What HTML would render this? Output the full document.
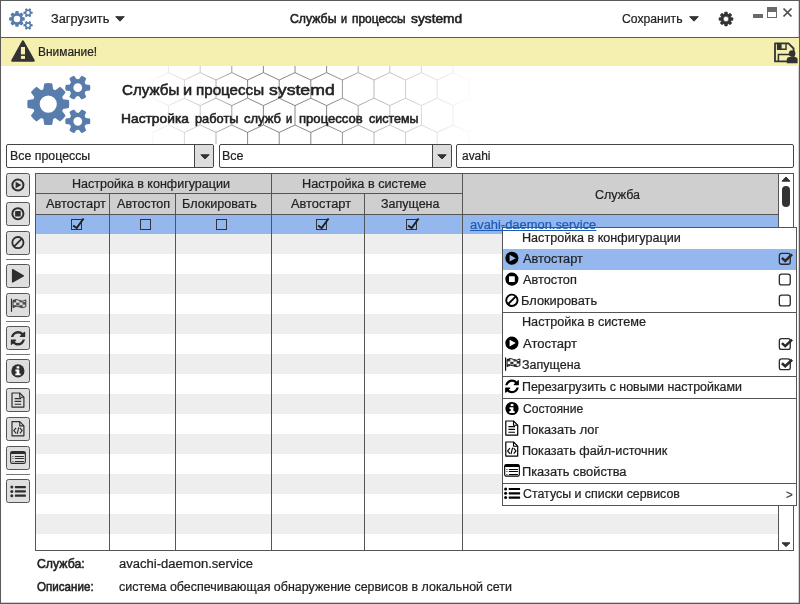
<!DOCTYPE html>
<html lang="ru"><head><meta charset="utf-8"><title>Службы и процессы systemd</title>
<style>
*{box-sizing:border-box;margin:0;padding:0}
html,body{width:800px;height:604px;overflow:hidden;background:#fff}
body{font-family:"Liberation Sans","DejaVu Sans",sans-serif;font-size:12.5px;color:#222;position:relative}
.a{position:absolute}
svg{position:absolute;overflow:visible}
.t{position:absolute;white-space:nowrap;line-height:16px;height:16px;transform-origin:0 0;-webkit-text-stroke:.22px currentColor}
.b{-webkit-text-stroke:.55px currentColor}
.u{text-decoration:underline}
#win{left:0;top:0;width:800px;height:604px;border:1px solid #5a5a5a;background:#fff}
#tsep{left:0;top:37px;width:800px;height:1px;background:#5a5a5a}
#warn{left:1px;top:38px;width:798px;height:28px;background:#f5f0b0}
.combo{border:1px solid #444;background:#fff;height:24px;top:144px;border-radius:2px;overflow:hidden}
.cbtn{position:absolute;right:0;top:0;width:19px;height:22px;background:#ddd;border-left:1px solid #444}
.tb{position:absolute;left:6px;width:24px;height:24px;border:1px solid #555;border-radius:2.5px;background:#dfdfdf}
.ts{position:absolute;left:6px;width:24px;height:1px;background:#777}
#grid{left:35px;top:173px;width:759px;height:378px;border:1px solid #555;background:#fff;overflow:hidden}
#hdr{left:0;top:0;width:742px;height:40px;background:#cfcfcf}
.vl{position:absolute;width:1px;background:#555}
.hl{position:absolute;height:1px;background:#555}
.st{position:absolute;left:0;width:742px;height:20px;background:#eee}
#sel{position:absolute;left:0;top:41px;width:742px;height:19px;background:#94b8ee}
.cb{position:absolute;width:11px;height:11px;border:1px solid #333;top:219px}
#menu{left:502px;top:227px;width:295px;height:279px;border:1px solid #555;background:#fff}
.ml{position:absolute;left:0;width:293px;height:1px;background:#555}
.mc{position:absolute;left:778.6px;width:12.5px;height:12.5px;border:1.5px solid #333;border-radius:3px}
</style></head><body>
<div id="win" class="a"></div>
<div id="tsep" class="a"></div>
<svg style="left:0;top:0" width="800" height="604" viewBox="0 0 800 604"><rect x="798.75" y="0" width="1.25" height="604" fill="#5a5a5a"/><rect x="0" y="602.7" width="800" height="1.3" fill="#5a5a5a"/></svg>
<div id="warn" class="a"></div>

<!-- title bar icons -->
<svg class="a" style="left:9px;top:8px" width="24.00" height="22.12" viewBox="0 0 64 59"><path fill="#587cac" fill-rule="evenodd" d="M16.35 14.29L17.25 8.48A21 21 0 0 1 25.25 8.48L26.15 14.29A15.6 15.6 0 0 1 28.26 15.16L33.00 11.69A21 21 0 0 1 38.66 17.35L35.19 22.09A15.6 15.6 0 0 1 36.06 24.20L41.87 25.10A21 21 0 0 1 41.87 33.10L36.06 34.00A15.6 15.6 0 0 1 35.19 36.11L38.66 40.85A21 21 0 0 1 33.00 46.51L28.26 43.04A15.6 15.6 0 0 1 26.15 43.91L25.25 49.72A21 21 0 0 1 17.25 49.72L16.35 43.91A15.6 15.6 0 0 1 14.24 43.04L9.50 46.51A21 21 0 0 1 3.84 40.85L7.31 36.11A15.6 15.6 0 0 1 6.44 34.00L0.63 33.10A21 21 0 0 1 0.63 25.10L6.44 24.20A15.6 15.6 0 0 1 7.31 22.09L3.84 17.35A21 21 0 0 1 9.50 11.69L14.24 15.16A15.6 15.6 0 0 1 16.35 14.29ZM12.65 29.10a8.6 8.6 0 1 0 17.2 0a8.6 8.6 0 1 0 -17.2 0ZM51.91 4.17L54.56 0.78A12.5 12.5 0 0 1 59.24 3.48L57.63 7.47A8.6 8.6 0 0 1 58.74 9.40L63.00 10.00A12.5 12.5 0 0 1 63.00 15.40L58.74 16.00A8.6 8.6 0 0 1 57.63 17.93L59.24 21.92A12.5 12.5 0 0 1 54.56 24.62L51.91 21.23A8.6 8.6 0 0 1 49.69 21.23L47.04 24.62A12.5 12.5 0 0 1 42.36 21.92L43.97 17.93A8.6 8.6 0 0 1 42.86 16.00L38.60 15.40A12.5 12.5 0 0 1 38.60 10.00L42.86 9.40A8.6 8.6 0 0 1 43.97 7.47L42.36 3.48A12.5 12.5 0 0 1 47.04 0.78L49.69 4.17A8.6 8.6 0 0 1 51.91 4.17ZM46.40 12.70a4.4 4.4 0 1 0 8.8 0a4.4 4.4 0 1 0 -8.8 0ZM51.91 37.77L54.56 34.38A12.5 12.5 0 0 1 59.24 37.08L57.63 41.07A8.6 8.6 0 0 1 58.74 43.00L63.00 43.60A12.5 12.5 0 0 1 63.00 49.00L58.74 49.60A8.6 8.6 0 0 1 57.63 51.53L59.24 55.52A12.5 12.5 0 0 1 54.56 58.22L51.91 54.83A8.6 8.6 0 0 1 49.69 54.83L47.04 58.22A12.5 12.5 0 0 1 42.36 55.52L43.97 51.53A8.6 8.6 0 0 1 42.86 49.60L38.60 49.00A12.5 12.5 0 0 1 38.60 43.60L42.86 43.00A8.6 8.6 0 0 1 43.97 41.07L42.36 37.08A12.5 12.5 0 0 1 47.04 34.38L49.69 37.77A8.6 8.6 0 0 1 51.91 37.77ZM46.40 46.30a4.4 4.4 0 1 0 8.8 0a4.4 4.4 0 1 0 -8.8 0Z"/></svg>
<svg style="left:114.6px;top:15.6px" width="10" height="6" viewBox="0 0 10 6"><path d="M.7 .7H9.3L5 5.2Z" fill="#333" stroke="#333" stroke-width="1" stroke-linejoin="round"/></svg>
<svg style="left:688.8px;top:15.7px" width="10" height="6" viewBox="0 0 10 6"><path d="M.7 .7H9.3L5 5.2Z" fill="#333" stroke="#333" stroke-width="1" stroke-linejoin="round"/></svg>
<svg style="left:715px;top:10px" width="22" height="18" viewBox="715 10 22 18"><path d="M724.40 14.05L724.75 12.11A7.0 7.0 0 0 1 727.25 12.11L727.60 14.05A5.2 5.2 0 0 1 728.37 14.37L729.99 13.25A7.0 7.0 0 0 1 731.75 15.01L730.63 16.63A5.2 5.2 0 0 1 730.95 17.40L732.89 17.75A7.0 7.0 0 0 1 732.89 20.25L730.95 20.60A5.2 5.2 0 0 1 730.63 21.37L731.75 22.99A7.0 7.0 0 0 1 729.99 24.75L728.37 23.63A5.2 5.2 0 0 1 727.60 23.95L727.25 25.89A7.0 7.0 0 0 1 724.75 25.89L724.40 23.95A5.2 5.2 0 0 1 723.63 23.63L722.01 24.75A7.0 7.0 0 0 1 720.25 22.99L721.37 21.37A5.2 5.2 0 0 1 721.05 20.60L719.11 20.25A7.0 7.0 0 0 1 719.11 17.75L721.05 17.40A5.2 5.2 0 0 1 721.37 16.63L720.25 15.01A7.0 7.0 0 0 1 722.01 13.25L723.63 14.37A5.2 5.2 0 0 1 724.40 14.05ZM723.30 19.00a2.7 2.7 0 1 0 5.4 0a2.7 2.7 0 1 0 -5.4 0Z" fill="#333" fill-rule="evenodd" stroke="#333" stroke-width=".6" stroke-linejoin="round"/></svg>
<div class="a" style="left:753px;top:14px;width:10px;height:4px;background:#6a6a6a"></div>
<div class="a" style="left:767px;top:7px;width:10px;height:11px;border:1px solid #6a6a6a;border-top-width:5px"></div>
<svg style="left:783px;top:8px" width="9" height="9" viewBox="0 0 9 9"><path d="M.5 .5L8.5 8.5M8.5 .5L.5 8.5" stroke="#4a4a4a" stroke-width="1.7" fill="none"/></svg>

<!-- warning bar icons -->
<svg style="left:10px;top:40px" width="26" height="23" viewBox="10 40 26 23"><path d="M22.9 41.6L12.4 60.6H33.6Z" fill="#333" stroke="#333" stroke-width="2.4" stroke-linejoin="round"/><rect x="20.9" y="47" width="4.1" height="7.4" fill="#f5f0b0"/><rect x="20.9" y="55.9" width="4.1" height="3" fill="#f5f0b0"/></svg>
<svg style="left:772px;top:40px" width="27" height="25" viewBox="772 40 27 25"><path d="M775 43.4H788.5L793.6 48.5V61.4H775Z" fill="none" stroke="#333" stroke-width="1.8" stroke-linejoin="round"/><rect x="777.4" y="43.2" width="4.2" height="6" fill="#333"/><path d="M777.6 43.4V49.2H786V43.4" fill="none" stroke="#333" stroke-width="1.4"/><path d="M778.4 61.4V54.6H790.5" fill="none" stroke="#333" stroke-width="1.5"/><circle cx="792.1" cy="53.6" r="3.3" fill="#333"/><path d="M786.8 63.2V59.8Q786.8 57 789.6 57H794.8Q797.6 57 797.6 59.8V63.2Z" fill="#333"/></svg>

<!-- header -->
<svg class="a" style="left:0;top:66px;overflow:hidden" width="800" height="78" viewBox="0 66 800 78"><defs><linearGradient id="hg" x1="0" x2="1" y1="0" y2="0"><stop offset="0.18" stop-color="#fff" stop-opacity="0"/><stop offset="0.25" stop-color="#fff" stop-opacity=".35"/><stop offset="0.31" stop-color="#fff" stop-opacity=".8"/><stop offset="0.41" stop-color="#fff" stop-opacity=".8"/><stop offset="0.45" stop-color="#fff" stop-opacity=".55"/><stop offset="0.5" stop-color="#fff" stop-opacity=".35"/><stop offset="0.55" stop-color="#fff" stop-opacity=".18"/><stop offset="0.595" stop-color="#fff" stop-opacity="0"/></linearGradient><mask id="hm"><rect x="0" y="60" width="800" height="90" fill="url(#hg)"/></mask></defs><path mask="url(#hm)" d="M105.4 54V72.6M105.4 72.6L89.6 80.0M105.4 72.6L121.2 80.0M137.0 54V72.6M137.0 72.6L121.2 80.0M137.0 72.6L152.8 80.0M168.6 54V72.6M168.6 72.6L152.8 80.0M168.6 72.6L184.4 80.0M200.2 54V72.6M200.2 72.6L184.4 80.0M200.2 72.6L216.0 80.0M231.8 54V72.6M231.8 72.6L216.0 80.0M231.8 72.6L247.6 80.0M263.4 54V72.6M263.4 72.6L247.6 80.0M263.4 72.6L279.2 80.0M295.0 54V72.6M295.0 72.6L279.2 80.0M295.0 72.6L310.8 80.0M326.6 54V72.6M326.6 72.6L310.8 80.0M326.6 72.6L342.4 80.0M358.2 54V72.6M358.2 72.6L342.4 80.0M358.2 72.6L374.0 80.0M389.8 54V72.6M389.8 72.6L374.0 80.0M389.8 72.6L405.6 80.0M421.4 54V72.6M421.4 72.6L405.6 80.0M421.4 72.6L437.2 80.0M453.0 54V72.6M453.0 72.6L437.2 80.0M453.0 72.6L468.8 80.0M484.6 54V72.6M484.6 72.6L468.8 80.0M484.6 72.6L500.4 80.0M516.2 54V72.6M516.2 72.6L500.4 80.0M516.2 72.6L532.0 80.0M89.6 80V98.2M89.6 98.2L73.8 105.6M89.6 98.2L105.4 105.6M121.2 80V98.2M121.2 98.2L105.4 105.6M121.2 98.2L137.0 105.6M152.8 80V98.2M152.8 98.2L137.0 105.6M152.8 98.2L168.6 105.6M184.4 80V98.2M184.4 98.2L168.6 105.6M184.4 98.2L200.2 105.6M216.0 80V98.2M216.0 98.2L200.2 105.6M216.0 98.2L231.8 105.6M247.6 80V98.2M247.6 98.2L231.8 105.6M247.6 98.2L263.4 105.6M279.2 80V98.2M279.2 98.2L263.4 105.6M279.2 98.2L295.0 105.6M310.8 80V98.2M310.8 98.2L295.0 105.6M310.8 98.2L326.6 105.6M342.4 80V98.2M342.4 98.2L326.6 105.6M342.4 98.2L358.2 105.6M374.0 80V98.2M374.0 98.2L358.2 105.6M374.0 98.2L389.8 105.6M405.6 80V98.2M405.6 98.2L389.8 105.6M405.6 98.2L421.4 105.6M437.2 80V98.2M437.2 98.2L421.4 105.6M437.2 98.2L453.0 105.6M468.8 80V98.2M468.8 98.2L453.0 105.6M468.8 98.2L484.6 105.6M500.4 80V98.2M500.4 98.2L484.6 105.6M500.4 98.2L516.2 105.6M105.4 105.7V125M105.4 125L89.6 132.4M105.4 125L121.2 132.4M137.0 105.7V125M137.0 125L121.2 132.4M137.0 125L152.8 132.4M168.6 105.7V125M168.6 125L152.8 132.4M168.6 125L184.4 132.4M200.2 105.7V125M200.2 125L184.4 132.4M200.2 125L216.0 132.4M231.8 105.7V125M231.8 125L216.0 132.4M231.8 125L247.6 132.4M263.4 105.7V125M263.4 125L247.6 132.4M263.4 125L279.2 132.4M295.0 105.7V125M295.0 125L279.2 132.4M295.0 125L310.8 132.4M326.6 105.7V125M326.6 125L310.8 132.4M326.6 125L342.4 132.4M358.2 105.7V125M358.2 125L342.4 132.4M358.2 125L374.0 132.4M389.8 105.7V125M389.8 125L374.0 132.4M389.8 125L405.6 132.4M421.4 105.7V125M421.4 125L405.6 132.4M421.4 125L437.2 132.4M453.0 105.7V125M453.0 125L437.2 132.4M453.0 125L468.8 132.4M484.6 105.7V125M484.6 125L468.8 132.4M484.6 125L500.4 132.4M516.2 105.7V125M516.2 125L500.4 132.4M516.2 125L532.0 132.4M89.6 132.2V150M89.6 150L73.8 157.4M89.6 150L105.4 157.4M121.2 132.2V150M121.2 150L105.4 157.4M121.2 150L137.0 157.4M152.8 132.2V150M152.8 150L137.0 157.4M152.8 150L168.6 157.4M184.4 132.2V150M184.4 150L168.6 157.4M184.4 150L200.2 157.4M216.0 132.2V150M216.0 150L200.2 157.4M216.0 150L231.8 157.4M247.6 132.2V150M247.6 150L231.8 157.4M247.6 150L263.4 157.4M279.2 132.2V150M279.2 150L263.4 157.4M279.2 150L295.0 157.4M310.8 132.2V150M310.8 150L295.0 157.4M310.8 150L326.6 157.4M342.4 132.2V150M342.4 150L326.6 157.4M342.4 150L358.2 157.4M374.0 132.2V150M374.0 150L358.2 157.4M374.0 150L389.8 157.4M405.6 132.2V150M405.6 150L389.8 157.4M405.6 150L421.4 157.4M437.2 132.2V150M437.2 150L421.4 157.4M437.2 150L453.0 157.4M468.8 132.2V150M468.8 150L453.0 157.4M468.8 150L484.6 157.4M500.4 132.2V150M500.4 150L484.6 157.4M500.4 150L516.2 157.4" stroke="#444" stroke-width=".8" fill="none"/></svg>
<svg class="a" style="left:27px;top:75px" width="64.00" height="59.00" viewBox="0 0 64 59"><path fill="#587cac" fill-rule="evenodd" d="M16.35 14.29L17.25 8.48A21 21 0 0 1 25.25 8.48L26.15 14.29A15.6 15.6 0 0 1 28.26 15.16L33.00 11.69A21 21 0 0 1 38.66 17.35L35.19 22.09A15.6 15.6 0 0 1 36.06 24.20L41.87 25.10A21 21 0 0 1 41.87 33.10L36.06 34.00A15.6 15.6 0 0 1 35.19 36.11L38.66 40.85A21 21 0 0 1 33.00 46.51L28.26 43.04A15.6 15.6 0 0 1 26.15 43.91L25.25 49.72A21 21 0 0 1 17.25 49.72L16.35 43.91A15.6 15.6 0 0 1 14.24 43.04L9.50 46.51A21 21 0 0 1 3.84 40.85L7.31 36.11A15.6 15.6 0 0 1 6.44 34.00L0.63 33.10A21 21 0 0 1 0.63 25.10L6.44 24.20A15.6 15.6 0 0 1 7.31 22.09L3.84 17.35A21 21 0 0 1 9.50 11.69L14.24 15.16A15.6 15.6 0 0 1 16.35 14.29ZM12.65 29.10a8.6 8.6 0 1 0 17.2 0a8.6 8.6 0 1 0 -17.2 0ZM51.91 4.17L54.56 0.78A12.5 12.5 0 0 1 59.24 3.48L57.63 7.47A8.6 8.6 0 0 1 58.74 9.40L63.00 10.00A12.5 12.5 0 0 1 63.00 15.40L58.74 16.00A8.6 8.6 0 0 1 57.63 17.93L59.24 21.92A12.5 12.5 0 0 1 54.56 24.62L51.91 21.23A8.6 8.6 0 0 1 49.69 21.23L47.04 24.62A12.5 12.5 0 0 1 42.36 21.92L43.97 17.93A8.6 8.6 0 0 1 42.86 16.00L38.60 15.40A12.5 12.5 0 0 1 38.60 10.00L42.86 9.40A8.6 8.6 0 0 1 43.97 7.47L42.36 3.48A12.5 12.5 0 0 1 47.04 0.78L49.69 4.17A8.6 8.6 0 0 1 51.91 4.17ZM46.40 12.70a4.4 4.4 0 1 0 8.8 0a4.4 4.4 0 1 0 -8.8 0ZM51.91 37.77L54.56 34.38A12.5 12.5 0 0 1 59.24 37.08L57.63 41.07A8.6 8.6 0 0 1 58.74 43.00L63.00 43.60A12.5 12.5 0 0 1 63.00 49.00L58.74 49.60A8.6 8.6 0 0 1 57.63 51.53L59.24 55.52A12.5 12.5 0 0 1 54.56 58.22L51.91 54.83A8.6 8.6 0 0 1 49.69 54.83L47.04 58.22A12.5 12.5 0 0 1 42.36 55.52L43.97 51.53A8.6 8.6 0 0 1 42.86 49.60L38.60 49.00A12.5 12.5 0 0 1 38.60 43.60L42.86 43.00A8.6 8.6 0 0 1 43.97 41.07L42.36 37.08A12.5 12.5 0 0 1 47.04 34.38L49.69 37.77A8.6 8.6 0 0 1 51.91 37.77ZM46.40 46.30a4.4 4.4 0 1 0 8.8 0a4.4 4.4 0 1 0 -8.8 0Z"/></svg>

<!-- combos -->
<div class="a combo" style="left:6px;width:208px"><div class="cbtn"></div></div>
<div class="a combo" style="left:219px;width:233px"><div class="cbtn"></div></div>
<div class="a combo" style="left:456px;width:338px"></div>
<svg style="left:199.5px;top:153.7px" width="10" height="6" viewBox="0 0 10 6"><path d="M.8 .8H9.2L5 5Z" fill="#333" stroke="#333" stroke-width="1" stroke-linejoin="round"/></svg>
<svg style="left:436.5px;top:153.7px" width="10" height="6" viewBox="0 0 10 6"><path d="M.8 .8H9.2L5 5Z" fill="#333" stroke="#333" stroke-width="1" stroke-linejoin="round"/></svg>

<!-- toolbar -->
<div class="tb" style="top:173px"></div>
<div class="tb" style="top:202px"></div>
<div class="tb" style="top:231px"></div>
<div class="ts" style="top:259px"></div>
<div class="tb" style="top:264px"></div>
<div class="tb" style="top:293px"></div>
<div class="ts" style="top:321px"></div>
<div class="tb" style="top:326px"></div>
<div class="ts" style="top:354px"></div>
<div class="tb" style="top:359px"></div>
<div class="tb" style="top:388px"></div>
<div class="tb" style="top:417px"></div>
<div class="tb" style="top:446px"></div>
<div class="ts" style="top:474px"></div>
<div class="tb" style="top:479px"></div>
<svg style="left:0px;top:170px" width="40" height="340" viewBox="0 170 40 340"><circle cx="17.9" cy="185" r="5.55" fill="none" stroke="#2e2e2e" stroke-width="1.95"/><path d="M15.599999999999998 181.7L21.4 185L15.599999999999998 188.3Z" fill="#2e2e2e"/><circle cx="17.9" cy="213.7" r="5.55" fill="none" stroke="#2e2e2e" stroke-width="1.95"/><rect x="15.099999999999998" y="210.89999999999998" width="5.6" height="5.6" rx=".5" fill="#2e2e2e"/><circle cx="17.9" cy="242.6" r="5.6" fill="none" stroke="#2e2e2e" stroke-width="1.8"/><path d="M13.94 246.56L21.86 238.64" stroke="#2e2e2e" stroke-width="1.8"/><path d="M12.599999999999998 269.6L23.299999999999997 275.8L12.599999999999998 282.0Z" fill="#2e2e2e" stroke="#2e2e2e" stroke-width="1.4" stroke-linejoin="round"/><path d="M11.5 298.6V311.8" stroke="#2e2e2e" stroke-width="1.2"/><clipPath id="fc1"><path d="M13.0 300.5Q16.2 298.5 19.4 300.40000000000003T25.8 299.90000000000003V306.70000000000005Q22.6 308.5 19.4 306.90000000000003T13.0 307.6Z"/></clipPath><path d="M13.0 300.5Q16.2 298.5 19.4 300.40000000000003T25.8 299.90000000000003V306.70000000000005Q22.6 308.5 19.4 306.90000000000003T13.0 307.6Z" fill="#dfdfdf"/><g clip-path="url(#fc1)"><rect x="13.00" y="299.80" width="3.20" height="2.67" fill="#2e2e2e" opacity=".8"/><rect x="13.00" y="305.13" width="3.20" height="2.67" fill="#2e2e2e" opacity=".8"/><rect x="16.20" y="302.77" width="3.20" height="2.67" fill="#2e2e2e" opacity=".8"/><rect x="19.40" y="299.80" width="3.20" height="2.67" fill="#2e2e2e" opacity=".8"/><rect x="19.40" y="305.13" width="3.20" height="2.67" fill="#2e2e2e" opacity=".8"/><rect x="22.60" y="301.97" width="3.20" height="2.67" fill="#2e2e2e" opacity=".8"/></g><path d="M13.0 300.5Q16.2 298.5 19.4 300.40000000000003T25.8 299.90000000000003V306.70000000000005Q22.6 308.5 19.4 306.90000000000003T13.0 307.6Z" fill="none" stroke="#2e2e2e" stroke-width=".9"/><path transform="translate(18 338.3) scale(0.00937) translate(-896 -896)" d="M1639 1056q0 5-1 7-64 268-268 434.5t-478 166.5q-146 0-282.5-55t-243.5-157l-129 129q-19 19-45 19t-45-19-19-45v-448q0-26 19-45t45-19h448q26 0 45 19t19 45-19 45l-137 137q71 66 161 102t187 36q134 0 250-65t186-179q11-17 53-117 8-23 30-23h192q13 0 22.5 9.5t9.5 22.5zm25-800v448q0 26-19 45t-45 19h-448q-26 0-45-19t-19-45 19-45l138-138q-148-137-349-137-134 0-250 65t-186 179q-11 17-53 117-8 23-30 23h-199q-13 0-22.5-9.5t-9.5-22.5v-7q65-268 270-434.5t480-166.5q146 0 284 55.5t245 156.5l130-129q19-19 45-19t45 19 19 45z" fill="#2e2e2e"/><circle cx="17.9" cy="370.9" r="6.6" fill="#2e2e2e"/><rect x="16.599999999999998" y="366.29999999999995" width="2.7" height="2.2" fill="#fff"/><path d="M15.399999999999999 369.59999999999997H19.299999999999997V373.5H20.5V375.29999999999995H15.299999999999999V373.5H16.599999999999998V371.4H15.399999999999999Z" fill="#fff"/><path d="M12.0 393.0H19.7L23.9 397.2V407.09999999999997H12.0Z" fill="none" stroke="#2e2e2e" stroke-width="1.2" stroke-linejoin="round"/><path d="M19.7 393.0V397.2H23.9" fill="none" stroke="#2e2e2e" stroke-width="1.1" stroke-linejoin="round"/><path d="M14.600000000000001 398.59999999999997H21.200000000000003M14.600000000000001 401.4H21.200000000000003M14.600000000000001 404.2H21.200000000000003" stroke="#2e2e2e" stroke-width="1.15"/><path d="M12.0 421.70000000000005H19.7L23.9 425.90000000000003V435.8H12.0Z" fill="none" stroke="#2e2e2e" stroke-width="1.2" stroke-linejoin="round"/><path d="M19.7 421.70000000000005V425.90000000000003H23.9" fill="none" stroke="#2e2e2e" stroke-width="1.1" stroke-linejoin="round"/><path d="M16.1 427.8L13.8 430.6L16.1 433.40000000000003M19.9 427.8L22.200000000000003 430.6L19.9 433.40000000000003M18.8 427.40000000000003L17.2 433.8" fill="none" stroke="#2e2e2e" stroke-width="1.15"/><rect x="10.600000000000001" y="451.65000000000003" width="14.75" height="11.700000000000001" rx="1.7" fill="none" stroke="#2e2e2e" stroke-width="1.1"/><path d="M10.65 454.1V453.1Q10.65 451.70000000000005 12.05 451.70000000000005H23.9Q25.299999999999997 451.70000000000005 25.299999999999997 453.1V454.1Z" fill="#2e2e2e"/><path d="M14.850000000000001 456.5H23.9M14.850000000000001 458.5H23.9M14.850000000000001 461.5H23.9" stroke="#2e2e2e" stroke-width="1.05"/><path d="M12.25 456.5H13.450000000000001M12.25 458.5H13.450000000000001M12.25 461.5H13.450000000000001" stroke="#2e2e2e" stroke-width=".9" opacity=".8"/><circle cx="11.8" cy="487.1" r="1.5" fill="#2e2e2e"/><rect x="14.9" y="486.0" width="11.0" height="2.2" rx=".4" fill="#2e2e2e"/><circle cx="11.8" cy="491.4" r="1.5" fill="#2e2e2e"/><rect x="14.9" y="490.29999999999995" width="11.0" height="2.2" rx=".4" fill="#2e2e2e"/><circle cx="11.8" cy="495.7" r="1.5" fill="#2e2e2e"/><rect x="14.9" y="494.59999999999997" width="11.0" height="2.2" rx=".4" fill="#2e2e2e"/></svg>

<!-- grid -->
<div id="grid" class="a">
 <div id="hdr" class="a"></div>
 <div id="sel"></div>
 <div class="st" style="top:60px"></div><div class="st" style="top:100px"></div><div class="st" style="top:140px"></div><div class="st" style="top:180px"></div><div class="st" style="top:220px"></div><div class="st" style="top:260px"></div><div class="st" style="top:300px"></div><div class="st" style="top:340px"></div>
 <div class="hl" style="left:0;top:19px;width:427px"></div>
 <div class="hl" style="left:0;top:40px;width:742px"></div>
 <div class="vl" style="left:73px;top:20px;height:360px"></div>
 <div class="vl" style="left:139px;top:20px;height:360px"></div>
 <div class="vl" style="left:235px;top:0;height:380px"></div>
 <div class="vl" style="left:328px;top:20px;height:360px"></div>
 <div class="vl" style="left:426px;top:0;height:380px"></div>
 <div class="vl" style="left:742px;top:0;height:380px"></div>
</div>
<!-- scrollbar -->
<svg style="left:781px;top:176px" width="10" height="6" viewBox="0 0 10 6"><path d="M1 5.2H9L5 1Z" fill="#333" stroke="#333" stroke-width="1" stroke-linejoin="round"/></svg>
<div class="a" style="left:782px;top:186px;width:8px;height:21px;border-radius:4px;background:#333"></div>
<svg style="left:781px;top:542.4px" width="10" height="6" viewBox="0 0 10 6"><path d="M1 .8H9L5 4.6Z" fill="#333" stroke="#333" stroke-width="1" stroke-linejoin="round"/></svg>
<!-- grid checkboxes -->
<div class="cb" style="left:71px"></div><div class="cb" style="left:139.5px"></div><div class="cb" style="left:215.5px"></div><div class="cb" style="left:316px"></div><div class="cb" style="left:406px"></div>
<svg style="left:60px;top:210px" width="740" height="170" viewBox="60 210 740 170"><path d="M73.1 225.4L76.6 228.1L83.6 218.5" fill="none" stroke="#222" stroke-width="1.9" stroke-linejoin="round"/><path d="M318.1 225.4L321.6 228.1L328.6 218.5" fill="none" stroke="#222" stroke-width="1.9" stroke-linejoin="round"/><path d="M408.1 225.4L411.6 228.1L418.6 218.5" fill="none" stroke="#222" stroke-width="1.9" stroke-linejoin="round"/></svg>

<!-- context menu -->
<div id="menu" class="a">
 <div class="a" style="left:0;top:21px;width:293px;height:21px;background:#94b8ee"></div>
 <div class="ml" style="top:84px"></div>
 <div class="ml" style="top:148px"></div>
 <div class="ml" style="top:170px"></div>
 <div class="ml" style="top:255px"></div>
</div>

<svg style="left:500px;top:245px" width="300" height="260" viewBox="500 245 300 260"><path d="M505.35 258.20a6.55 6.55 0 1 0 13.1 0a6.55 6.55 0 1 0 -13.1 0ZM509.59999999999997 254.79999999999998L515.8 258.2L509.59999999999997 261.59999999999997Z" fill="#000" fill-rule="evenodd"/><path d="M505.35 279.10a6.55 6.55 0 1 0 13.1 0a6.55 6.55 0 1 0 -13.1 0ZM509.6 276.20000000000005H514.1999999999999Q514.8 276.20000000000005 514.8 276.80000000000007V281.4Q514.8 282.0 514.1999999999999 282.0H509.6Q509.0 282.0 509.0 281.4V276.80000000000007Q509.0 276.20000000000005 509.6 276.20000000000005Z" fill="#000" fill-rule="evenodd"/><circle cx="511.9" cy="300.3" r="5.65" fill="none" stroke="#000" stroke-width="1.9"/><path d="M507.90 304.30L515.90 296.30" stroke="#000" stroke-width="1.9"/><path d="M505.35 343.10a6.55 6.55 0 1 0 13.1 0a6.55 6.55 0 1 0 -13.1 0ZM509.59999999999997 339.70000000000005L515.8 343.1L509.59999999999997 346.5Z" fill="#000" fill-rule="evenodd"/><path d="M505.6 357.6V370.8" stroke="#000" stroke-width="1.2"/><clipPath id="fc2"><path d="M507.1 359.5Q510.3 357.5 513.5 359.40000000000003T519.9 358.90000000000003V365.70000000000005Q516.7 367.5 513.5 365.90000000000003T507.1 366.6Z"/></clipPath><path d="M507.1 359.5Q510.3 357.5 513.5 359.40000000000003T519.9 358.90000000000003V365.70000000000005Q516.7 367.5 513.5 365.90000000000003T507.1 366.6Z" fill="#fff"/><g clip-path="url(#fc2)"><rect x="507.10" y="358.80" width="3.20" height="2.67" fill="#000" opacity=".8"/><rect x="507.10" y="364.13" width="3.20" height="2.67" fill="#000" opacity=".8"/><rect x="510.30" y="361.77" width="3.20" height="2.67" fill="#000" opacity=".8"/><rect x="513.50" y="358.80" width="3.20" height="2.67" fill="#000" opacity=".8"/><rect x="513.50" y="364.13" width="3.20" height="2.67" fill="#000" opacity=".8"/><rect x="516.70" y="360.97" width="3.20" height="2.67" fill="#000" opacity=".8"/></g><path d="M507.1 359.5Q510.3 357.5 513.5 359.40000000000003T519.9 358.90000000000003V365.70000000000005Q516.7 367.5 513.5 365.90000000000003T507.1 366.6Z" fill="none" stroke="#000" stroke-width=".9"/><path transform="translate(512 386.4) scale(0.00898) translate(-896 -896)" d="M1639 1056q0 5-1 7-64 268-268 434.5t-478 166.5q-146 0-282.5-55t-243.5-157l-129 129q-19 19-45 19t-45-19-19-45v-448q0-26 19-45t45-19h448q26 0 45 19t19 45-19 45l-137 137q71 66 161 102t187 36q134 0 250-65t186-179q11-17 53-117 8-23 30-23h192q13 0 22.5 9.5t9.5 22.5zm25-800v448q0 26-19 45t-45 19h-448q-26 0-45-19t-19-45 19-45l138-138q-148-137-349-137-134 0-250 65t-186 179q-11 17-53 117-8 23-30 23h-199q-13 0-22.5-9.5t-9.5-22.5v-7q65-268 270-434.5t480-166.5q146 0 284 55.5t245 156.5l130-129q19-19 45-19t45 19 19 45z" fill="#000"/><circle cx="512" cy="408.5" r="6.6" fill="#000"/><rect x="510.7" y="403.9" width="2.7" height="2.2" fill="#fff"/><path d="M509.5 407.2H513.4V411.1H514.6V412.9H509.4V411.1H510.7V409.0H509.5Z" fill="#fff"/><path d="M505.8 421.0H513.5L517.6999999999999 425.2V435.09999999999997H505.8Z" fill="none" stroke="#000" stroke-width="1.2" stroke-linejoin="round"/><path d="M513.5 421.0V425.2H517.6999999999999" fill="none" stroke="#000" stroke-width="1.1" stroke-linejoin="round"/><path d="M508.4 426.59999999999997H515.0M508.4 429.4H515.0M508.4 432.2H515.0" stroke="#000" stroke-width="1.15"/><path d="M505.8 442.0H513.5L517.6999999999999 446.2V456.09999999999997H505.8Z" fill="none" stroke="#000" stroke-width="1.2" stroke-linejoin="round"/><path d="M513.5 442.0V446.2H517.6999999999999" fill="none" stroke="#000" stroke-width="1.1" stroke-linejoin="round"/><path d="M509.9 448.09999999999997L507.59999999999997 450.9L509.9 453.7M513.7 448.09999999999997L516.0 450.9L513.7 453.7M512.6 447.7L511.0 454.09999999999997" fill="none" stroke="#000" stroke-width="1.15"/><rect x="504.65000000000003" y="464.65000000000003" width="14.700000000000001" height="11.5" rx="1.7" fill="none" stroke="#000" stroke-width="1.1"/><path d="M504.70000000000005 467.1V466.1Q504.70000000000005 464.70000000000005 506.1 464.70000000000005H517.9Q519.3 464.70000000000005 519.3 466.1V467.1Z" fill="#000"/><path d="M508.90000000000003 469.5H517.9M508.90000000000003 471.5H517.9M508.90000000000003 474.5H517.9" stroke="#000" stroke-width="1.05"/><path d="M506.3 469.5H507.5M506.3 471.5H507.5M506.3 474.5H507.5" stroke="#000" stroke-width=".9" opacity=".8"/><circle cx="505.6" cy="489.0" r="1.5" fill="#000"/><rect x="508.70000000000005" y="487.9" width="11.4" height="2.2" rx=".4" fill="#000"/><circle cx="505.6" cy="493.29999999999995" r="1.5" fill="#000"/><rect x="508.70000000000005" y="492.19999999999993" width="11.4" height="2.2" rx=".4" fill="#000"/><circle cx="505.6" cy="497.59999999999997" r="1.5" fill="#000"/><rect x="508.70000000000005" y="496.49999999999994" width="11.4" height="2.2" rx=".4" fill="#000"/><rect x="779.35" y="253.45000000000002" width="10.9" height="10.8" rx="2.2" fill="none" stroke="#2a2a2a" stroke-width="1.3"/><rect x="779.35" y="274.04999999999995" width="10.9" height="10.8" rx="2.2" fill="none" stroke="#2a2a2a" stroke-width="1.3"/><rect x="779.35" y="295.04999999999995" width="10.9" height="10.8" rx="2.2" fill="none" stroke="#2a2a2a" stroke-width="1.3"/><rect x="779.35" y="338.65" width="10.9" height="10.8" rx="2.2" fill="none" stroke="#2a2a2a" stroke-width="1.3"/><rect x="779.35" y="358.84999999999997" width="10.9" height="10.8" rx="2.2" fill="none" stroke="#2a2a2a" stroke-width="1.3"/><path d="M781.9000000000001 257.90000000000003L785.2 260.90000000000003L792.1 254.4" fill="none" stroke="#2a2a2a" stroke-width="2.6"/><path d="M781.9000000000001 343.1L785.2 346.1L792.1 339.6" fill="none" stroke="#2a2a2a" stroke-width="2.6"/><path d="M781.9000000000001 363.3L785.2 366.3L792.1 359.8" fill="none" stroke="#2a2a2a" stroke-width="2.6"/></svg>

<span class="t" id="t1" style="left:51.11px;top:11.00px;transform:scaleX(1.0215)">Загрузить</span>
<span class="t b" id="t2a" style="left:289.77px;top:11.00px;transform:scaleX(0.9807)">Службы</span>
<span class="t b" id="t2b" style="left:340.87px;top:11.00px;transform:scaleX(0.8657)">и</span>
<span class="t b" id="t2c" style="left:351.57px;top:11.00px;transform:scaleX(0.9540)">процессы</span>
<span class="t b" id="t2d" style="left:410.87px;top:11.00px;transform:scaleX(1.1003)">systemd</span>
<span class="t" id="t3" style="left:621.86px;top:11.00px;transform:scaleX(0.9745)">Сохранить</span>
<span class="t" id="t4" style="left:38.16px;top:44.00px;transform:scaleX(0.9534)">Внимание!</span>
<span class="t b" id="t5a" style="left:121.77px;top:80.16px;transform:scaleX(0.9828);font-size:15.4px;line-height:20px;height:20px">Службы</span>
<span class="t b" id="t5b" style="left:183.20px;top:80.16px;transform:scaleX(1.0657);font-size:15.4px;line-height:20px;height:20px">и</span>
<span class="t b" id="t5c" style="left:196.28px;top:80.16px;transform:scaleX(0.9853);font-size:15.4px;line-height:20px;height:20px">процессы</span>
<span class="t b" id="t5d" style="left:269.27px;top:80.16px;transform:scaleX(1.1466);font-size:15.4px;line-height:20px;height:20px">systemd</span>
<span class="t b" id="t6a" style="left:121.17px;top:111.00px;transform:scaleX(1.1036)">Настройка</span>
<span class="t b" id="t6b" style="left:194.87px;top:111.00px;transform:scaleX(1.0234)">работы</span>
<span class="t b" id="t6c" style="left:244.27px;top:111.00px;transform:scaleX(1.0374)">служб</span>
<span class="t b" id="t6d" style="left:286.27px;top:111.00px;transform:scaleX(0.8800)">и</span>
<span class="t b" id="t6e" style="left:298.97px;top:111.00px;transform:scaleX(1.0461)">процессов</span>
<span class="t b" id="t6f" style="left:368.77px;top:111.00px;transform:scaleX(0.9989)">системы</span>
<span class="t" id="c1" style="left:9.62px;top:148.00px;transform:scaleX(0.9891)">Все процессы</span>
<span class="t" id="c2" style="left:222.31px;top:148.00px;transform:scaleX(0.9996)">Все</span>
<span class="t" id="c3" style="left:462.11px;top:148.00px;transform:scaleX(0.9545)">avahi</span>
<span class="t" id="h1" style="left:71.91px;top:176.00px;transform:scaleX(1.0026)">Настройка в конфигурации</span>
<span class="t" id="h2" style="left:302.10px;top:176.00px;transform:scaleX(1.0135)">Настройка в системе</span>
<span class="t" id="h3" style="left:45.71px;top:196.00px;transform:scaleX(1.0251)">Автостарт</span>
<span class="t" id="h4" style="left:117.01px;top:196.00px;transform:scaleX(1.0049)">Автостоп</span>
<span class="t" id="h5" style="left:182.10px;top:196.00px;transform:scaleX(1.0093)">Блокировать</span>
<span class="t" id="h6" style="left:291.11px;top:196.00px;transform:scaleX(1.0286)">Автостарт</span>
<span class="t" id="h7" style="left:381.11px;top:196.00px;transform:scaleX(0.9993)">Запущена</span>
<span class="t" id="h8" style="left:594.81px;top:187.00px;transform:scaleX(0.9999)">Служба</span>
<span class="t u" id="lk" style="left:469.81px;top:217.00px;transform:scaleX(1.0327);color:#1c5bb5">avahi-daemon.service</span>
<span class="t" id="m0" style="left:521.60px;top:230.00px;transform:scaleX(1.0077)">Настройка в конфигурации</span>
<span class="t" id="m1" style="left:522.61px;top:251.00px;transform:scaleX(1.0268)">Автостарт</span>
<span class="t" id="m2" style="left:522.61px;top:272.00px;transform:scaleX(1.0193)">Автостоп</span>
<span class="t" id="m3" style="left:521.08px;top:293.00px;transform:scaleX(1.0251)">Блокировать</span>
<span class="t" id="m4" style="left:521.60px;top:314.00px;transform:scaleX(1.0106)">Настройка в системе</span>
<span class="t" id="m5" style="left:522.61px;top:336.00px;transform:scaleX(1.0426)">Атостарт</span>
<span class="t" id="m6" style="left:522.11px;top:357.00px;transform:scaleX(1.0002)">Запущена</span>
<span class="t" id="m7" style="left:521.62px;top:379.00px;transform:scaleX(0.9929)">Перезагрузить с новыми настройками</span>
<span class="t" id="m8" style="left:522.61px;top:401.00px;transform:scaleX(0.9657)">Состояние</span>
<span class="t" id="m9" style="left:521.59px;top:422.00px;transform:scaleX(1.0205)">Показать лог</span>
<span class="t" id="m10" style="left:521.60px;top:443.00px;transform:scaleX(1.0112)">Показать файл-источник</span>
<span class="t" id="m11" style="left:521.58px;top:464.00px;transform:scaleX(1.0269)">Пказать свойства</span>
<span class="t" id="m12" style="left:522.61px;top:486.00px;transform:scaleX(0.9909)">Статусы и списки сервисов</span>
<span class="t" id="m13" style="left:786.41px;top:487.00px;transform:scaleX(0.9257);color:#444">&gt;</span>
<span class="t b" id="f1" style="left:36.52px;top:556.00px;transform:scaleX(0.9828)">Служба:</span>
<span class="t" id="f2" style="left:119.11px;top:556.00px;transform:scaleX(1.0428)">avachi-daemon.service</span>
<span class="t b" id="f3" style="left:36.52px;top:579.00px;transform:scaleX(0.9289)">Описание:</span>
<span class="t" id="f4" style="left:119.11px;top:579.00px;transform:scaleX(0.9970)">система обеспечивающая обнаружение сервисов в локальной сети</span>
</body></html>
